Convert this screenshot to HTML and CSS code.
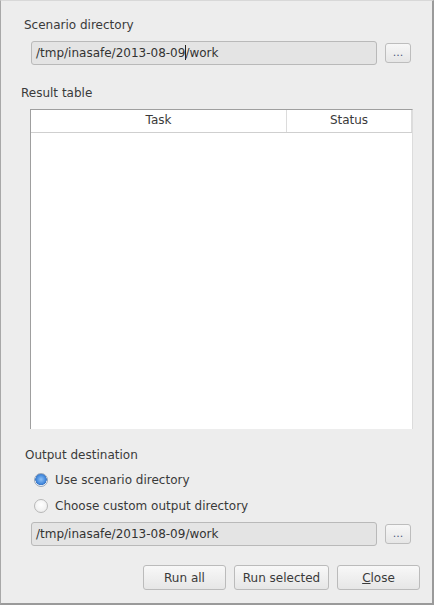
FILE: index.html
```html
<!DOCTYPE html>
<html>
<head>
<meta charset="utf-8">
<link rel="stylesheet" href="styles.css">
</head>
<body>
<div class="window">
  <div class="group-label scen">Scenario directory</div>
  <div class="path-row first">
    <div class="line-edit">/tmp/inasafe/2013-08-09<span class="caret"></span>/work</div>
    <button class="dots">...</button>
  </div>
  <div class="group-label result">Result table</div>
  <div class="table">
    <div class="thead">
      <div class="th task">Task</div>
      <div class="th status">Status</div>
    </div>
    <div class="tbody"></div>
  </div>
  <div class="group-label output">Output destination</div>
  <div class="radio-row r1"><span class="radio on"></span><span>Use scenario directory</span></div>
  <div class="radio-row r2"><span class="radio"></span><span>Choose custom output directory</span></div>
  <div class="path-row second">
    <div class="line-edit">/tmp/inasafe/2013-08-09/work</div>
    <button class="dots">...</button>
  </div>
  <div class="actions">
    <button class="btn">Run all</button>
    <button class="btn wide">Run selected</button>
    <button class="btn"><u>C</u>lose</button>
  </div>
</div>
</body>
</html>
```

FILE: styles.css
```css
html, body {
  margin: 0;
  padding: 0;
  background: #ededed;
}
.window {
  box-sizing: border-box;
  width: 434px;
  height: 605px;
  border-top: 1px solid #d8d8d8;
  border-left: 1px solid #a8a8a8;
  border-right: 2px solid #9a9a9a;
  border-bottom: 2px solid #9a9a9a;
  background: #ededed;
  font-family: "DejaVu Sans", sans-serif;
  font-size: 12px;
  color: #3a3a3a;
  display: flex;
  flex-direction: column;
  overflow: hidden;
}
.group-label {
  line-height: 15px;
  height: 15px;
}
.scen { margin: 17px 0 0 23px; }
.result { margin: 21px 0 0 20px; }
.output { margin: 19px 0 0 24px; }

.path-row {
  display: flex;
  align-items: center;
  margin-left: 30px;
  gap: 8px;
}
.path-row.first { margin-top: 8px; }
.path-row.second { margin-top: 7px; }
.line-edit {
  box-sizing: border-box;
  width: 346px;
  height: 24px;
  border: 1px solid #b9b9b9;
  border-radius: 3px;
  background: #e4e4e4;
  padding: 0 0 0 4px;
  line-height: 22px;
  white-space: nowrap;
  color: #333;
}
.caret {
  display: inline-block;
  width: 1px;
  height: 15px;
  background: #222;
  vertical-align: -3px;
  margin: 0 -1px 0 0;
}
.dots {
  box-sizing: border-box;
  width: 26px;
  height: 20px;
  padding: 0;
  border: 1px solid #bdbdbd;
  border-radius: 3px;
  background: linear-gradient(#f7f7f7, #e6e6e6);
  font-family: "DejaVu Sans", sans-serif;
  font-size: 11px;
  color: #4a5a80;
  line-height: 16px;
}

.table {
  box-sizing: border-box;
  margin: 8px 0 0 29px;
  width: 383px;
  height: 320px;
  border-top: 1px solid #9f9f9f;
  border-left: 1px solid #9f9f9f;
  border-right: 1px solid #dcdcdc;
  background: #fff;
  display: flex;
  flex-direction: column;
}
.thead {
  display: flex;
  height: 22px;
  border-bottom: 1px solid #cfcfcf;
  background: #fff;
}
.th {
  text-align: center;
  line-height: 21px;
  color: #3a3a3a;
}
.task {
  width: 255px;
  border-right: 1px solid #dcdcdc;
}
.status {
  width: 124px;
  border-right: 1px solid #dcdcdc;
}
.tbody { flex: 1; }

.radio-row {
  display: flex;
  align-items: center;
  margin-left: 33px;
  height: 18px;
  gap: 7px;
}
.r1 { margin-top: 8px; }
.r2 { margin-top: 8px; }
.radio {
  box-sizing: border-box;
  width: 14px;
  height: 14px;
  border-radius: 50%;
  border: 1px solid #b8b8b8;
  background: radial-gradient(circle at 50% 40%, #ffffff 0%, #f2f2f2 60%, #e2e2e2 100%);
}
.radio.on {
  border-color: #9aa8ba;
  background: radial-gradient(circle at 50% 45%, #8fc0f5 0%, #4a8fe0 45%, #3b78c8 62%, #e8eef6 66%, #f4f4f4 100%);
}

.actions {
  display: flex;
  justify-content: flex-end;
  gap: 8px;
  margin: 19px 12px 0 0;
}
.btn {
  box-sizing: border-box;
  width: 83px;
  height: 25px;
  padding: 0;
  border: 1px solid #bbbbbb;
  border-radius: 3px;
  background: linear-gradient(#f8f8f8, #e6e6e6);
  font-family: "DejaVu Sans", sans-serif;
  font-size: 12px;
  color: #3a3a3a;
  line-height: 22px;
}
.btn.wide { width: 95px; }
```
